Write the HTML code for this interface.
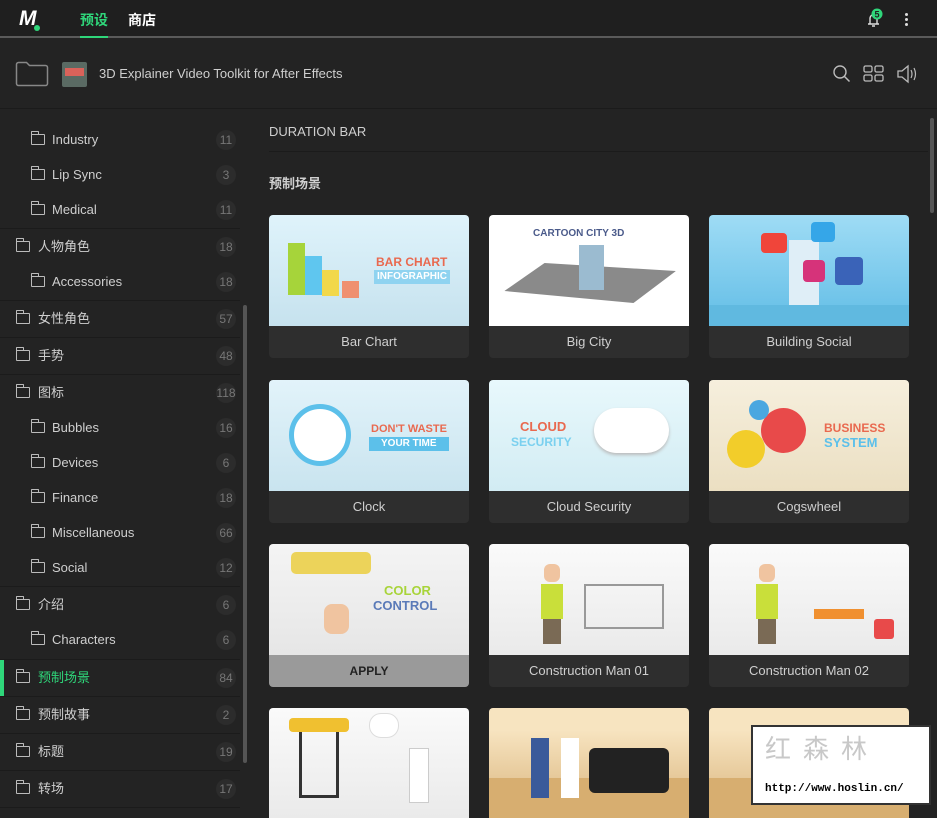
<!DOCTYPE html>
<html style="width:937px;height:818px;overflow:hidden"><head><meta charset="utf-8"><style>
*{box-sizing:border-box;margin:0;padding:0}
body{width:937px;height:818px;overflow:hidden;background:#232323;font-family:"Liberation Sans","Noto Sans CJK SC",sans-serif;color:#cfcfcf;position:relative}
.top{position:absolute;left:0;top:0;width:937px;height:38px;background:#1f1f1f;border-bottom:2px solid #5a5a5a}
.bar2{position:absolute;left:0;top:40px;width:937px;height:69px;background:#232323;border-bottom:1px solid #1b1b1b}
.side{position:absolute;left:0;top:110px;width:240px;height:708px;background:#232323;overflow:hidden}
.row{position:absolute;left:0;width:240px;height:36px;font-size:13px;color:#cfcfcf;border-top:1px solid #1b1b1b}
.row .t{position:absolute;top:10px;line-height:16px}
.row .f{position:absolute;top:12px;width:14px;height:11px;border:1.3px solid #bbb;border-radius:1px}
.row .f:before{content:"";position:absolute;left:-1px;top:-4px;width:6px;height:3px;border:1.3px solid #bbb;border-bottom:none;border-radius:1px 1px 0 0}
.row .c{position:absolute;right:4px;top:8px;width:20px;height:20px;border-radius:10px;background:#2c2c2c;color:#777;font-size:12px;text-align:center;line-height:20px}
.card{position:absolute;width:200px;height:143px;background:#2e2e2e;border-radius:4px;overflow:hidden}
.card .th{position:absolute;left:0;top:0;width:200px;height:111px;overflow:hidden}
.card .cap{position:absolute;left:0;top:111px;width:200px;height:32px;text-align:center;line-height:32px;font-size:13px;color:#cfcfcf}
.lbl{position:absolute;font-weight:bold;font-size:12px;line-height:14px}
</style></head><body>
<div class="top">
 <div style="position:absolute;left:19px;top:9px;font-weight:900;font-size:21px;color:#fff;font-style:italic;line-height:20px">M</div>
 <div style="position:absolute;left:34px;top:25px;width:6px;height:6px;border-radius:3px;background:#2fd67a"></div>
 <div style="position:absolute;left:80px;top:11px;font-size:14px;color:#2fd67a;font-weight:bold;line-height:18px">预设</div>
 <div style="position:absolute;left:80px;top:36px;width:28px;height:2px;background:#2fd67a"></div>
 <div style="position:absolute;left:128px;top:11px;font-size:14px;color:#fff;font-weight:bold;line-height:18px">商店</div>
 <svg style="position:absolute;left:864px;top:8px" width="22" height="22" viewBox="0 0 22 22"><path d="M4 16h11M6 16V10a4 4 0 0 1 7 -2M13 10v6M8 18h3" stroke="#ddd" stroke-width="1.4" fill="none"/><circle cx="13" cy="6" r="5.5" fill="#2fd67a"/><text x="13" y="9.5" font-size="9" font-weight="bold" text-anchor="middle" fill="#1f1f1f" font-family="Liberation Sans">5</text></svg>
 <div style="position:absolute;left:905px;top:13px;width:3px;height:3px;background:#ddd;border-radius:2px;box-shadow:0 5px 0 #ddd,0 10px 0 #ddd"></div>
</div>
<div class="bar2">
 <svg style="position:absolute;left:15px;top:21px" width="34" height="26" viewBox="0 0 34 26"><path d="M1.5 3.5a2 2 0 0 1 2-2h8l3 3h16a2 2 0 0 1 2 2v16a2 2 0 0 1-2 2h-27a2 2 0 0 1-2-2z" fill="none" stroke="#888" stroke-width="1.5"/></svg>
 <div style="position:absolute;left:62px;top:22px;width:25px;height:25px;background:#5a6a63;border-radius:2px"><div style="margin:6px 3px;height:8px;background:#d9625a"></div></div>
 <div style="position:absolute;left:99px;top:26px;font-size:13px;color:#cfcfcf">3D Explainer Video Toolkit for After Effects</div>
 <svg style="position:absolute;left:832px;top:24px" width="86" height="22" viewBox="0 0 86 22"><circle cx="8" cy="8" r="6" stroke="#bbb" stroke-width="1.4" fill="none"/><path d="M12.5 12.5l5 5" stroke="#bbb" stroke-width="1.5"/><rect x="32" y="2" width="8" height="6" rx="1.5" stroke="#bbb" fill="none" stroke-width="1.3"/><rect x="43" y="2" width="8" height="6" rx="1.5" stroke="#bbb" fill="none" stroke-width="1.3"/><rect x="32" y="11" width="8" height="6" rx="1.5" stroke="#bbb" fill="none" stroke-width="1.3"/><rect x="43" y="11" width="8" height="6" rx="1.5" stroke="#bbb" fill="none" stroke-width="1.3"/><path d="M66 7h4l6-5v16l-6-5h-4z" stroke="#bbb" fill="none" stroke-width="1.3"/><path d="M79 6q2 4 0 8M82 4q3 6 0 12" stroke="#bbb" fill="none" stroke-width="1.2"/></svg>
</div>
<div class="side">
 <div class="row" style="top:12px;border:none"><div class="f" style="left:31px"></div><div class="t" style="left:52px">Industry</div><div class="c">11</div></div>
 <div class="row" style="top:47px;border:none"><div class="f" style="left:31px"></div><div class="t" style="left:52px">Lip Sync</div><div class="c">3</div></div>
 <div class="row" style="top:82px;border:none"><div class="f" style="left:31px"></div><div class="t" style="left:52px">Medical</div><div class="c">11</div></div>
 <div class="row" style="top:118px"><div class="f" style="left:16px"></div><div class="t" style="left:38px">人物角色</div><div class="c">18</div></div>
 <div class="row" style="top:154px;border:none"><div class="f" style="left:31px"></div><div class="t" style="left:52px">Accessories</div><div class="c">18</div></div>
 <div class="row" style="top:190px"><div class="f" style="left:16px"></div><div class="t" style="left:38px">女性角色</div><div class="c">57</div></div>
 <div class="row" style="top:227px"><div class="f" style="left:16px"></div><div class="t" style="left:38px">手势</div><div class="c">48</div></div>
 <div class="row" style="top:264px"><div class="f" style="left:16px"></div><div class="t" style="left:38px">图标</div><div class="c">118</div></div>
 <div class="row" style="top:300px;border:none"><div class="f" style="left:31px"></div><div class="t" style="left:52px">Bubbles</div><div class="c">16</div></div>
 <div class="row" style="top:335px;border:none"><div class="f" style="left:31px"></div><div class="t" style="left:52px">Devices</div><div class="c">6</div></div>
 <div class="row" style="top:370px;border:none"><div class="f" style="left:31px"></div><div class="t" style="left:52px">Finance</div><div class="c">18</div></div>
 <div class="row" style="top:405px;border:none"><div class="f" style="left:31px"></div><div class="t" style="left:52px">Miscellaneous</div><div class="c">66</div></div>
 <div class="row" style="top:440px;border:none"><div class="f" style="left:31px"></div><div class="t" style="left:52px">Social</div><div class="c">12</div></div>
 <div class="row" style="top:476px"><div class="f" style="left:16px"></div><div class="t" style="left:38px">介绍</div><div class="c">6</div></div>
 <div class="row" style="top:512px;border:none"><div class="f" style="left:31px"></div><div class="t" style="left:52px">Characters</div><div class="c">6</div></div>
 <div class="row" style="top:549px"><div style="position:absolute;left:0;top:0;width:4px;height:36px;background:#2fd67a"></div><div class="f" style="left:16px"></div><div class="t" style="left:38px;color:#2fd67a">预制场景</div><div class="c">84</div></div>
 <div class="row" style="top:586px"><div class="f" style="left:16px"></div><div class="t" style="left:38px">预制故事</div><div class="c">2</div></div>
 <div class="row" style="top:623px"><div class="f" style="left:16px"></div><div class="t" style="left:38px">标题</div><div class="c">19</div></div>
 <div class="row" style="top:660px"><div class="f" style="left:16px"></div><div class="t" style="left:38px">转场</div><div class="c">17</div></div>
 <div class="row" style="top:697px"></div>
</div>
<div style="position:absolute;left:243px;top:305px;width:4px;height:458px;background:#555;border-radius:2px"></div>
<div style="position:absolute;left:930px;top:118px;width:4px;height:95px;background:#555;border-radius:2px"></div>
<div style="position:absolute;left:269px;top:124px;font-size:13px;color:#cfcfcf">DURATION BAR</div>
<div style="position:absolute;left:269px;top:151px;width:659px;height:1px;background:#1b1b1b"></div>
<div style="position:absolute;left:269px;top:176px;font-size:13px;color:#cfcfcf;font-weight:bold;line-height:16px">预制场景</div>

<div class="card" style="left:269px;top:215px"><div class="th" style="background:linear-gradient(#dff3fb,#c6e2ee)">
 <div style="position:absolute;left:19px;top:28px;width:17px;height:52px;background:#a6d43a"></div><div style="position:absolute;left:36px;top:41px;width:17px;height:39px;background:#5fc6ef"></div><div style="position:absolute;left:53px;top:55px;width:17px;height:26px;background:#f2d84a"></div><div style="position:absolute;left:73px;top:66px;width:17px;height:17px;background:#ef9070"></div>
 <div class="lbl" style="left:107px;top:40px;color:#e9694f">BAR CHART</div><div class="lbl" style="left:105px;top:55px;background:#8fd3f0;color:#fff;font-size:10px;padding:0 3px">INFOGRAPHIC</div></div><div class="cap">Bar Chart</div></div>
<div class="card" style="left:489px;top:215px"><div class="th" style="background:#fff">
 <div class="lbl" style="left:44px;top:12px;color:#4a5a8a;font-size:10px">CARTOON CITY 3D</div>
 <div style="position:absolute;left:20px;top:48px;width:160px;height:40px;background:#8a8a8a;transform:skewX(-30deg);clip-path:polygon(15% 0,100% 20%,85% 100%,0 70%)"></div>
 <div style="position:absolute;left:90px;top:30px;width:25px;height:45px;background:#9bbbd0"></div></div><div class="cap">Big City</div></div>
<div class="card" style="left:709px;top:215px"><div class="th" style="background:linear-gradient(#9fdcf5,#62bde6)">
 <div style="position:absolute;left:80px;top:25px;width:30px;height:70px;background:#dfeef7"></div><div style="position:absolute;left:52px;top:18px;width:26px;height:20px;background:#f0453a;border-radius:4px"></div><div style="position:absolute;left:102px;top:7px;width:24px;height:20px;background:#35a6e8;border-radius:4px"></div><div style="position:absolute;left:94px;top:45px;width:22px;height:22px;background:#d6337a;border-radius:4px"></div><div style="position:absolute;left:126px;top:42px;width:28px;height:28px;background:#3a63b8;border-radius:4px"></div>
 <div style="position:absolute;left:0;top:90px;width:200px;height:21px;background:#60b9e0"></div></div><div class="cap">Building Social</div></div>

<div class="card" style="left:269px;top:380px"><div class="th" style="background:linear-gradient(#e2f3fa,#c9e4ef)">
 <div style="position:absolute;left:20px;top:24px;width:62px;height:62px;border-radius:31px;background:#fff;border:5px solid #5cc0ea"></div>
 <div class="lbl" style="left:102px;top:42px;color:#e9694f;font-size:11px">DON'T WASTE</div><div class="lbl" style="left:100px;top:57px;background:#5cc0ea;color:#fff;font-size:10px;padding:0 12px">YOUR TIME</div></div><div class="cap">Clock</div></div>
<div class="card" style="left:489px;top:380px"><div class="th" style="background:linear-gradient(#e8f8fc,#d2ecf3)">
 <div class="lbl" style="left:31px;top:40px;color:#e9694f;font-size:13px">CLOUD</div><div class="lbl" style="left:22px;top:55px;color:#7ad0ef;font-size:12px">SECURITY</div>
 <div style="position:absolute;left:105px;top:28px;width:75px;height:45px;border-radius:25px;background:#fff;box-shadow:0 2px 3px #bbb"></div></div><div class="cap">Cloud Security</div></div>
<div class="card" style="left:709px;top:380px"><div class="th" style="background:linear-gradient(#f6efdd,#ebdfc2)">
 <div style="position:absolute;left:52px;top:28px;width:45px;height:45px;border-radius:23px;background:#e84a4a"></div><div style="position:absolute;left:18px;top:50px;width:38px;height:38px;border-radius:19px;background:#f2cd2a"></div><div style="position:absolute;left:40px;top:20px;width:20px;height:20px;border-radius:10px;background:#4aa7e0"></div>
 <div class="lbl" style="left:115px;top:41px;color:#e9694f">BUSINESS</div><div class="lbl" style="left:115px;top:56px;color:#5cc0ea;font-size:13px">SYSTEM</div></div><div class="cap">Cogswheel</div></div>

<div class="card" style="left:269px;top:544px"><div class="th" style="background:linear-gradient(#f4f4f4,#e6e6e6)">
 <div style="position:absolute;left:22px;top:8px;width:80px;height:22px;background:#ecd35a;border-radius:5px"></div><div style="position:absolute;left:55px;top:60px;width:25px;height:30px;background:#f0c4a0;border-radius:8px"></div>
 <div class="lbl" style="left:115px;top:40px;color:#a8d43a;font-size:13px">COLOR</div><div class="lbl" style="left:104px;top:55px;color:#5a7ab8;font-size:13px">CONTROL</div></div><div class="cap" style="background:#9a9a9a;color:#222;font-weight:bold;font-size:12px">APPLY</div></div>
<div class="card" style="left:489px;top:544px"><div class="th" style="background:linear-gradient(#fafafa,#eaeaea)">
 <div style="position:absolute;left:52px;top:40px;width:22px;height:35px;background:#c9df3a"></div><div style="position:absolute;left:55px;top:20px;width:16px;height:18px;background:#f0c4a0;border-radius:6px"></div><div style="position:absolute;left:54px;top:75px;width:18px;height:25px;background:#7a6a55"></div>
 <div style="position:absolute;left:95px;top:40px;width:80px;height:45px;border:2px solid #999"></div></div><div class="cap">Construction Man 01</div></div>
<div class="card" style="left:709px;top:544px"><div class="th" style="background:linear-gradient(#fafafa,#eaeaea)">
 <div style="position:absolute;left:47px;top:40px;width:22px;height:35px;background:#c9df3a"></div><div style="position:absolute;left:50px;top:20px;width:16px;height:18px;background:#f0c4a0;border-radius:6px"></div><div style="position:absolute;left:49px;top:75px;width:18px;height:25px;background:#7a6a55"></div>
 <div style="position:absolute;left:105px;top:65px;width:50px;height:10px;background:#f09030"></div><div style="position:absolute;left:165px;top:75px;width:20px;height:20px;background:#e84a4a;border-radius:3px"></div></div><div class="cap">Construction Man 02</div></div>

<div class="card" style="left:269px;top:708px;height:110px;border-radius:4px 4px 0 0"><div class="th" style="background:linear-gradient(#fafafa,#eaeaea)">
 <div style="position:absolute;left:30px;top:20px;width:40px;height:70px;border:3px solid #333;border-top:none"></div><div style="position:absolute;left:20px;top:10px;width:60px;height:14px;background:#f0c030;border-radius:4px"></div><div style="position:absolute;left:140px;top:40px;width:20px;height:55px;background:#fff;border:1px solid #ccc"></div><div style="position:absolute;left:100px;top:5px;width:30px;height:25px;background:#fff;border-radius:12px;border:1px solid #ddd"></div></div></div>
<div class="card" style="left:489px;top:708px;height:110px;border-radius:4px 4px 0 0"><div class="th" style="background:linear-gradient(#f7e4c0 20%,#d8b27a)">
 <div style="position:absolute;left:0;top:70px;width:200px;height:41px;background:#d7ae70"></div><div style="position:absolute;left:100px;top:40px;width:80px;height:45px;background:#222;border-radius:6px"></div><div style="position:absolute;left:42px;top:30px;width:18px;height:60px;background:#3a5a9a"></div><div style="position:absolute;left:72px;top:30px;width:18px;height:60px;background:#fff"></div></div></div>
<div class="card" style="left:709px;top:708px;height:110px;border-radius:4px 4px 0 0"><div class="th" style="background:linear-gradient(#f7e4c0 20%,#d8b27a)">
 <div style="position:absolute;left:0;top:70px;width:200px;height:41px;background:#d7ae70"></div></div></div>
<div style="position:absolute;left:751px;top:725px;width:180px;height:80px;background:#fff;border:2px solid #333;overflow:hidden">
 <div style="position:absolute;left:12px;top:5px;font-size:26px;color:#c8c8c8;letter-spacing:12px;line-height:34px">红森林</div>
 <div style="position:absolute;left:12px;top:56px;font-size:11px;font-family:'Liberation Mono',monospace;color:#000;font-weight:bold">http://www.hoslin.cn/</div>
</div>
</body></html>
